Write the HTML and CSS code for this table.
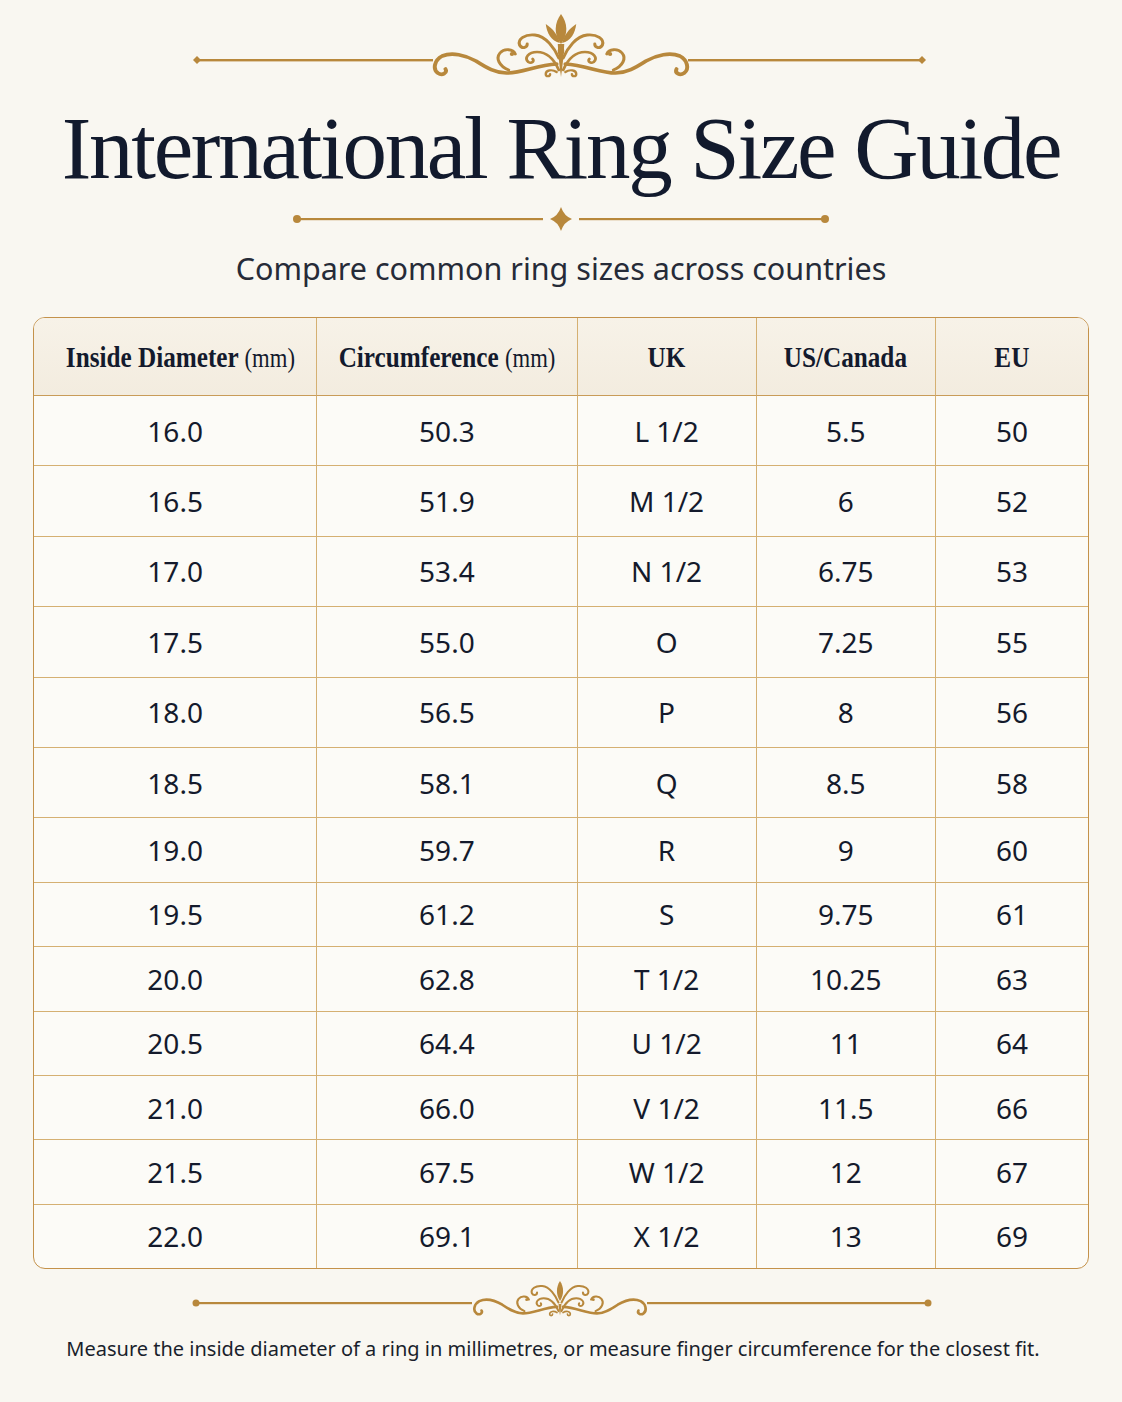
FILE: index.html
```html
<!DOCTYPE html>
<html lang="en">
<head>
<meta charset="utf-8">
<title>International Ring Size Guide</title>
<link rel="stylesheet" href="styles.css">
</head>
<body>
<div class="page">
  <svg class="orn orn-top" width="1122" height="88" viewBox="0 0 1122 88" aria-hidden="true">
    <defs>
      <g id="half" fill="none" stroke="#b8883c" stroke-linecap="round">
        <path stroke-width="3.6" d="M -106 9 C -104 13 -109 16 -113 13 C -118 9 -116 0 -109 -4 C -100 -8 -88 -5 -78 1 C -68 8 -60 13 -50 13 C -36 13 -22 5 -4 4"/>
        <path stroke-width="2.8" d="M -42 -6 C -44 -11 -52 -12 -56 -7 C -60 -2 -57 6 -48 10"/>
        <path stroke-width="2.8" d="M -2 -2 C -6 -12 -14 -24 -24 -25 C -33 -26 -40 -21 -38 -15 C -36 -11 -31 -12 -31 -16"/>
        <path stroke-width="2.6" d="M -2 10 C -6 0 -12 -8 -22 -8 C -30 -8 -34 -2 -30 2 C -27 4 -24 1 -26 -1"/>
        <path stroke-width="2.2" d="M -4 12 C -8 9 -14 10 -14 14 C -14 17 -10 17 -10 14"/>
        <circle cx="-45" cy="-6" r="2" fill="#b8883c" stroke="none"/>
      </g>
      <path id="sidepetal" fill="#b8883c" d="M -14 -36 C -7 -31 -3 -25 -1 -17 C -9 -19 -13 -27 -14 -36 Z"/>
    </defs>
    <g fill="#b8883c">
      <path d="M 197 56 L 201 60 L 197 64 L 193 60 Z"/>
      <rect x="197" y="59" width="236" height="2.4"/>
      <rect x="688" y="59" width="234" height="2.4"/>
      <path d="M 922 56 L 926 60 L 922 64 L 918 60 Z"/>
    </g>
    <g transform="translate(561 60) scale(1.09 1)">
      <use href="#half"/>
      <use href="#half" transform="scale(-1 1)"/>
      <use href="#sidepetal"/>
      <use href="#sidepetal" transform="scale(-1 1)"/>
      <path fill="#b8883c" d="M 0 -46 C 6 -37 7 -26 0 -16 C -7 -26 -6 -37 0 -46 Z"/>
      <path fill="#b8883c" d="M -3 -16 C -2.5 -6 -1.5 6 0 17 C 1.5 6 2.5 -6 3 -16 Z"/>
      <ellipse cx="0" cy="-9" rx="3" ry="4" fill="#b8883c"/>
    </g>
  </svg>

  <h1 class="title">International Ring Size Guide</h1>

  <svg class="orn orn-divider" width="1122" height="42" viewBox="0 200 1122 42" aria-hidden="true">
    <g fill="#b8883c">
      <circle cx="297" cy="221" r="4"/>
      <rect x="297" y="220" width="246" height="2.2"/>
      <path d="M 561 209 Q 564 218 572 221 Q 564 224 561 233 Q 558 224 550 221 Q 558 218 561 209 Z"/>
      <rect x="579" y="220" width="246" height="2.2"/>
      <circle cx="825" cy="221" r="4"/>
    </g>
  </svg>

  <p class="subtitle">Compare common ring sizes across countries</p>

  <div class="table-wrap">
    <table class="sizes">
      <colgroup>
        <col class="c1"><col class="c2"><col class="c3"><col class="c4"><col class="c5">
      </colgroup>
      <thead>
        <tr>
          <th class="first"><span class="hd">Inside Diameter <span class="unit">(mm)</span></span></th>
          <th><span class="hd">Circumference <span class="unit">(mm)</span></span></th>
          <th><span class="hd">UK</span></th>
          <th><span class="hd">US/Canada</span></th>
          <th><span class="hd">EU</span></th>
        </tr>
      </thead>
      <tbody>
        <tr class="ra"><td>16.0</td><td>50.3</td><td>L 1/2</td><td>5.5</td><td>50</td></tr>
        <tr class="ra"><td>16.5</td><td>51.9</td><td>M 1/2</td><td>6</td><td>52</td></tr>
        <tr class="ra"><td>17.0</td><td>53.4</td><td>N 1/2</td><td>6.75</td><td>53</td></tr>
        <tr class="ra"><td>17.5</td><td>55.0</td><td>O</td><td>7.25</td><td>55</td></tr>
        <tr class="ra"><td>18.0</td><td>56.5</td><td>P</td><td>8</td><td>56</td></tr>
        <tr class="ra"><td>18.5</td><td>58.1</td><td>Q</td><td>8.5</td><td>58</td></tr>
        <tr class="rb"><td>19.0</td><td>59.7</td><td>R</td><td>9</td><td>60</td></tr>
        <tr class="rb"><td>19.5</td><td>61.2</td><td>S</td><td>9.75</td><td>61</td></tr>
        <tr class="rb"><td>20.0</td><td>62.8</td><td>T 1/2</td><td>10.25</td><td>63</td></tr>
        <tr class="rb"><td>20.5</td><td>64.4</td><td>U 1/2</td><td>11</td><td>64</td></tr>
        <tr class="rb"><td>21.0</td><td>66.0</td><td>V 1/2</td><td>11.5</td><td>66</td></tr>
        <tr class="rb"><td>21.5</td><td>67.5</td><td>W 1/2</td><td>12</td><td>67</td></tr>
        <tr class="rb rlast"><td>22.0</td><td>69.1</td><td>X 1/2</td><td>13</td><td>69</td></tr>
      </tbody>
    </table>
  </div>

  <svg class="orn orn-bottom" width="1122" height="44" viewBox="0 1280 1122 44" aria-hidden="true">
    <g fill="#b8883c">
      <circle cx="196" cy="1302" r="3.5"/>
      <rect x="196" y="1301" width="276" height="2.2"/>
      <rect x="647" y="1301" width="281" height="2.2"/>
      <circle cx="928" cy="1302" r="3.5"/>
    </g>
    <g transform="translate(560 1303) scale(0.74 0.72)">
      <use href="#half"/>
      <use href="#half" transform="scale(-1 1)"/>
      <path fill="#b8883c" d="M 0 -32 C 5 -24 6 -14 0 -4 C -6 -14 -5 -24 0 -32 Z"/>
      <path fill="#b8883c" d="M -2 0 C -1.5 6 -1 10 0 16 C 1 10 1.5 6 2 0 Z"/>
    </g>
  </svg>

  <p class="note">Measure the inside diameter of a ring in millimetres, or measure finger circumference for the closest fit.</p>
</div>
</body>
</html>
```

FILE: styles.css
```css
html, body {
  margin: 0;
  padding: 0;
}

body {
  background: #f9f7f1;
  color: #141a2c;
  font-family: "Noto Sans", "DejaVu Sans", sans-serif;
}

.page {
  width: 1122px;
  padding-bottom: 20px;
}

.orn {
  display: block;
}

.title {
  margin: 10px 0 0;
  font-family: "Liberation Serif", "Times New Roman", serif;
  font-weight: 400;
  font-size: 89px;
  line-height: 100px;
  letter-spacing: -2.3px;
  text-align: center;
  color: #121a2d;
}

.subtitle {
  margin: 8px 0 0;
  font-size: 30.5px;
  line-height: 40px;
  text-align: center;
  color: #262b38;
}

.table-wrap {
  margin: 29px 0 0 33px;
  width: 1056px;
  box-sizing: border-box;
  border: 1.5px solid #c4924b;
  border-radius: 12px;
  overflow: hidden;
  background: #fcfbf7;
}

.sizes {
  width: 100%;
  border-collapse: separate;
  border-spacing: 0;
  table-layout: fixed;
}

.c1 { width: 283px; }
.c2 { width: 260px; }
.c3 { width: 179px; }
.c4 { width: 179px; }
.c5 { width: 152px; }

.sizes th,
.sizes td {
  padding: 0;
  text-align: center;
  vertical-align: middle;
  border-right: 1px solid #d5b072;
  border-bottom: 1px solid #d5b072;
}

.sizes th:last-child,
.sizes td:last-child {
  border-right: none;
}

.sizes tbody tr:last-child td {
  border-bottom: none;
}

.sizes thead tr {
  height: 78px;
}

.sizes thead th {
  background: linear-gradient(#f7f2e8, #f3ecdf);
  border-bottom: 1.5px solid #c99c58;
  font-family: "Liberation Serif", "Times New Roman", serif;
  font-weight: 700;
  font-size: 30px;
  color: #131a2d;
  white-space: nowrap;
}

.sizes thead th.first {
  padding-left: 10px;
}

.hd {
  display: inline-block;
  transform: scaleX(0.84);
}

.unit {
  font-weight: 400;
  font-size: 27px;
}

.sizes td {
  font-size: 28px;
  color: #141a2c;
}

.ra { height: 70.4px; }
.rb { height: 64.4px; }
.rlast { height: 63px; }

.orn-bottom {
  margin-top: 12px;
}

.note {
  margin: 10px 0 0;
  padding-right: 16px;
  font-size: 20px;
  line-height: 28px;
  text-align: center;
  color: #1a1f2c;
}
```
